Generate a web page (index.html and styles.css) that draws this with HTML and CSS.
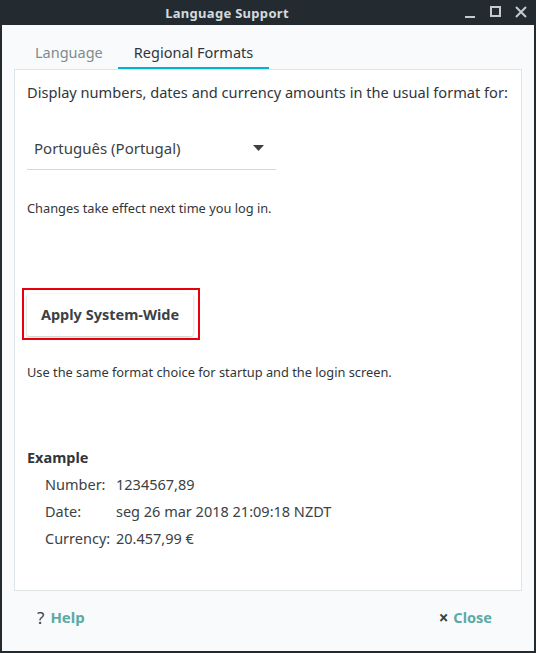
FILE: index.html
```html
<!DOCTYPE html>
<html>
<head>
<meta charset="utf-8">
<link rel="stylesheet" href="styles.css">
</head>
<body>
<div class="window">
  <div class="titlebar">
    <div class="title">Language Support</div>
    <div class="controls">
      <svg width="14" height="14" viewBox="0 0 14 14"><rect x="1" y="11" width="10" height="2" fill="#c5cbcf"/></svg>
      <svg width="14" height="14" viewBox="0 0 14 14"><rect x="2" y="2" width="9" height="9" fill="none" stroke="#c5cbcf" stroke-width="2"/></svg>
      <svg width="14" height="14" viewBox="0 0 14 14"><path d="M2 2 L12 12 M12 2 L2 12" stroke="#c5cbcf" stroke-width="2"/></svg>
    </div>
  </div>
  <div class="body">
    <div class="tabs">
      <div class="tab">Language</div>
      <div class="tab active">Regional Formats</div>
    </div>
    <div class="panel">
      <p class="lead">Display numbers, dates and currency amounts in the usual format for:</p>
      <div class="combo">
        <span>Português (Portugal)</span>
        <svg width="12" height="7" viewBox="0 0 12 7"><path d="M0 0 H11 L5.5 6 Z" fill="#3b4145"/></svg>
      </div>
      <p class="note first">Changes take effect next time you log in.</p>
      <div class="highlight">
        <button class="btn">Apply System-Wide</button>
      </div>
      <p class="note">Use the same format choice for startup and the login screen.</p>
      <div class="example">
        <div class="ex-title">Example</div>
        <div class="ex-grid">
          <span>Number:</span><span>1234567,89</span>
          <span>Date:</span><span>seg 26 mar 2018 21:09:18 NZDT</span>
          <span>Currency:</span><span>20.457,99 €</span>
        </div>
      </div>
    </div>
    <div class="footer">
      <div class="fbtn"><span class="ficon">?</span><span class="flabel">Help</span></div>
      <div class="fbtn close"><span class="ficon x">×</span><span class="flabel">Close</span></div>
    </div>
  </div>
</div>
</body>
</html>
```
FILE: styles.css
```css
* { box-sizing: border-box; }
html, body { margin: 0; padding: 0; }
body { font-family: "Noto Sans", "Open Sans", sans-serif; color: #31363b; }
.window {
  width: 536px; height: 653px;
  background: #232b31;
  display: flex; flex-direction: column;
  padding: 0 2px 2px 2px;
}
.titlebar {
  height: 25px; position: relative;
  display: flex; align-items: center; justify-content: center;
  padding-right: 82px;
}
.title { color: #d4d9dc; font-weight: bold; font-size: 13px; letter-spacing: 0.3px; }
.controls {
  position: absolute; right: 6px; top: 5px;
  display: flex; gap: 11px;
}
.controls svg { display: block; }
.body {
  flex: 1; background: #f8fafb;
  display: flex; flex-direction: column;
  padding: 12px 12px 0 12px;
}
.tabs { display: flex; padding-left: 15px; height: 32px; }
.tab {
  font-size: 14.5px; color: #7f8c8d;
  line-height: 30px; border-bottom: 2px solid transparent;
}
.tabs .tab:first-child { padding: 0 15px 0 6px; }
.tab.active { color: #31363b; border-bottom-color: #00b3d1; padding: 0 16px; }
.panel {
  background: #fff; border: 1px solid #dfe4e6;
  height: 522px; padding: 0 12px;
}
.lead { margin: 12px 0 0 0; font-size: 14.6px; line-height: 20px; white-space: nowrap; }
.combo {
  margin-top: 25px; width: 249px; height: 43px;
  border-bottom: 1px solid #d5d9db;
  display: flex; align-items: center; justify-content: space-between;
  padding: 0 11px 0 7px; font-size: 15px; color: #3b4145;
}
.note { font-size: 12.8px; margin: 0; line-height: 16px; white-space: nowrap; }
.note.first { margin-top: 30px; }
.highlight {
  margin-top: 72px; margin-left: -5px;
  width: 178px; height: 52px; border: 2px solid #e8000b;
  padding: 4px 5px 0 3px;
}
.btn {
  width: 166px; height: 42px; border: none; background: #fff;
  box-shadow: 0 1px 3px rgba(0,0,0,0.25); border-radius: 2px;
  font-family: "Noto Sans", sans-serif; font-weight: bold; font-size: 14.5px; color: #3b4145;
  padding-bottom: 4px;
}
.highlight + .note { margin-top: 24px; }
.example { margin-top: 67px; }
.ex-title { font-weight: bold; font-size: 14.5px; line-height: 20px; }
.ex-grid {
  display: grid; grid-template-columns: 71px auto; row-gap: 7px;
  margin: 7px 0 0 18px; font-size: 14.5px; line-height: 20px; color: #3b4145;
}
.footer {
  flex: 1; display: flex; justify-content: space-between; align-items: center;
  padding: 0 30px 8px 23px;
}
.fbtn { display: flex; align-items: center; gap: 6px; font-size: 15px; }
.fbtn.close { gap: 5px; font-size: 14.5px; }
.ficon { color: #3b4145; font-size: 17px; }
.ficon.x { font-weight: bold; font-size: 17px; }
.flabel { color: #5aaba4; font-weight: bold; }
```
